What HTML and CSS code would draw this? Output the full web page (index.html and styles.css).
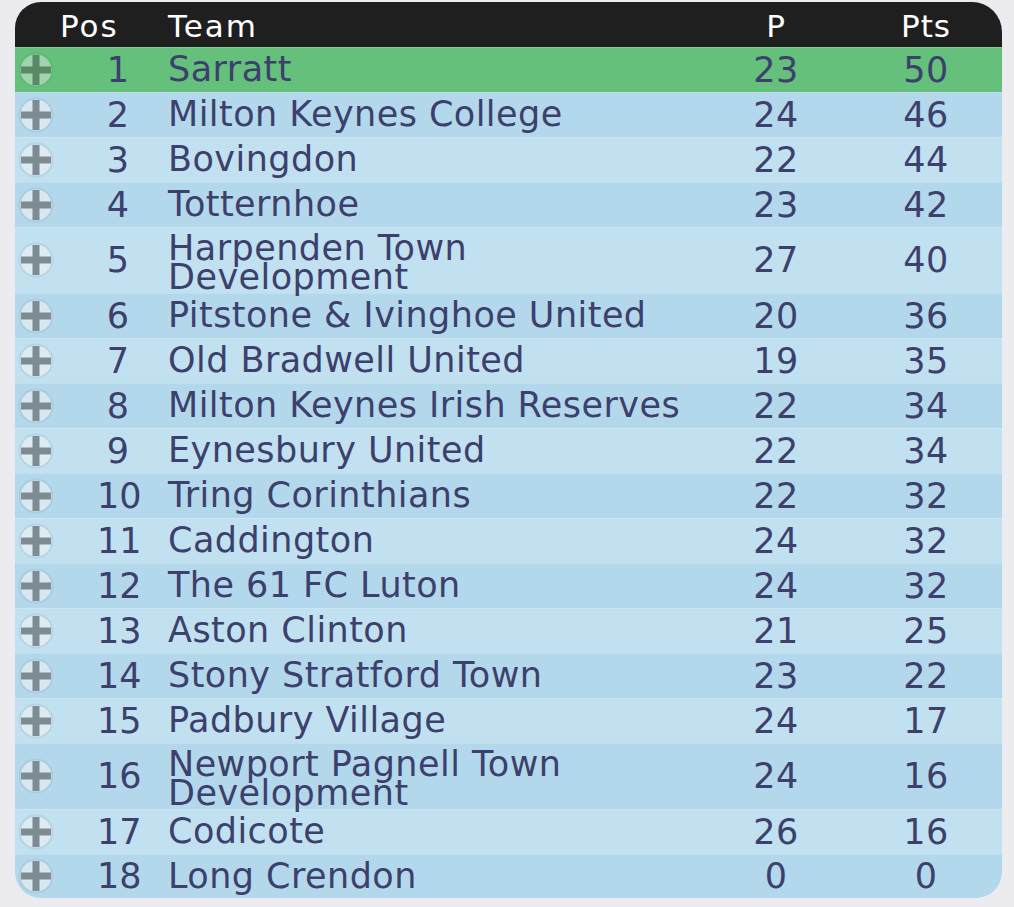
FILE: index.html
```html
<!DOCTYPE html>
<html>
<head>
<meta charset="utf-8">
<link rel="stylesheet" href="styles.css">
</head>
<body>
<div class="league">
  <div class="row head">
    <div class="c-pos">Pos</div>
    <div class="c-team">Team</div>
    <div class="c-p">P</div>
    <div class="c-pts">Pts</div>
  </div>
  <div class="row top">
    <div class="c-icon"><svg class="plus" viewBox="0 0 36 36"><circle cx="18" cy="18" r="17.5" class="ring"/><circle cx="18" cy="18" r="15.5" class="disc"/><rect x="14.5" y="3" width="7" height="30" class="bar"/><rect x="3" y="14.5" width="30" height="7" class="bar"/></svg></div>
    <div class="c-pos">1</div><div class="c-team">Sarratt</div><div class="c-p">23</div><div class="c-pts">50</div>
  </div>
  <div class="row even">
    <div class="c-icon"><svg class="plus" viewBox="0 0 36 36"><circle cx="18" cy="18" r="17.5" class="ring"/><circle cx="18" cy="18" r="15.5" class="disc"/><rect x="14.5" y="3" width="7" height="30" class="bar"/><rect x="3" y="14.5" width="30" height="7" class="bar"/></svg></div>
    <div class="c-pos">2</div><div class="c-team">Milton Keynes College</div><div class="c-p">24</div><div class="c-pts">46</div>
  </div>
  <div class="row odd">
    <div class="c-icon"><svg class="plus" viewBox="0 0 36 36"><circle cx="18" cy="18" r="17.5" class="ring"/><circle cx="18" cy="18" r="15.5" class="disc"/><rect x="14.5" y="3" width="7" height="30" class="bar"/><rect x="3" y="14.5" width="30" height="7" class="bar"/></svg></div>
    <div class="c-pos">3</div><div class="c-team">Bovingdon</div><div class="c-p">22</div><div class="c-pts">44</div>
  </div>
  <div class="row even">
    <div class="c-icon"><svg class="plus" viewBox="0 0 36 36"><circle cx="18" cy="18" r="17.5" class="ring"/><circle cx="18" cy="18" r="15.5" class="disc"/><rect x="14.5" y="3" width="7" height="30" class="bar"/><rect x="3" y="14.5" width="30" height="7" class="bar"/></svg></div>
    <div class="c-pos">4</div><div class="c-team">Totternhoe</div><div class="c-p">23</div><div class="c-pts">42</div>
  </div>
  <div class="row odd tall">
    <div class="c-icon"><svg class="plus" viewBox="0 0 36 36"><circle cx="18" cy="18" r="17.5" class="ring"/><circle cx="18" cy="18" r="15.5" class="disc"/><rect x="14.5" y="3" width="7" height="30" class="bar"/><rect x="3" y="14.5" width="30" height="7" class="bar"/></svg></div>
    <div class="c-pos">5</div><div class="c-team">Harpenden Town<br>Development</div><div class="c-p">27</div><div class="c-pts">40</div>
  </div>
  <div class="row even">
    <div class="c-icon"><svg class="plus" viewBox="0 0 36 36"><circle cx="18" cy="18" r="17.5" class="ring"/><circle cx="18" cy="18" r="15.5" class="disc"/><rect x="14.5" y="3" width="7" height="30" class="bar"/><rect x="3" y="14.5" width="30" height="7" class="bar"/></svg></div>
    <div class="c-pos">6</div><div class="c-team">Pitstone &amp; Ivinghoe United</div><div class="c-p">20</div><div class="c-pts">36</div>
  </div>
  <div class="row odd">
    <div class="c-icon"><svg class="plus" viewBox="0 0 36 36"><circle cx="18" cy="18" r="17.5" class="ring"/><circle cx="18" cy="18" r="15.5" class="disc"/><rect x="14.5" y="3" width="7" height="30" class="bar"/><rect x="3" y="14.5" width="30" height="7" class="bar"/></svg></div>
    <div class="c-pos">7</div><div class="c-team">Old Bradwell United</div><div class="c-p">19</div><div class="c-pts">35</div>
  </div>
  <div class="row even">
    <div class="c-icon"><svg class="plus" viewBox="0 0 36 36"><circle cx="18" cy="18" r="17.5" class="ring"/><circle cx="18" cy="18" r="15.5" class="disc"/><rect x="14.5" y="3" width="7" height="30" class="bar"/><rect x="3" y="14.5" width="30" height="7" class="bar"/></svg></div>
    <div class="c-pos">8</div><div class="c-team">Milton Keynes Irish Reserves</div><div class="c-p">22</div><div class="c-pts">34</div>
  </div>
  <div class="row odd">
    <div class="c-icon"><svg class="plus" viewBox="0 0 36 36"><circle cx="18" cy="18" r="17.5" class="ring"/><circle cx="18" cy="18" r="15.5" class="disc"/><rect x="14.5" y="3" width="7" height="30" class="bar"/><rect x="3" y="14.5" width="30" height="7" class="bar"/></svg></div>
    <div class="c-pos">9</div><div class="c-team">Eynesbury United</div><div class="c-p">22</div><div class="c-pts">34</div>
  </div>
  <div class="row even">
    <div class="c-icon"><svg class="plus" viewBox="0 0 36 36"><circle cx="18" cy="18" r="17.5" class="ring"/><circle cx="18" cy="18" r="15.5" class="disc"/><rect x="14.5" y="3" width="7" height="30" class="bar"/><rect x="3" y="14.5" width="30" height="7" class="bar"/></svg></div>
    <div class="c-pos">10</div><div class="c-team">Tring Corinthians</div><div class="c-p">22</div><div class="c-pts">32</div>
  </div>
  <div class="row odd">
    <div class="c-icon"><svg class="plus" viewBox="0 0 36 36"><circle cx="18" cy="18" r="17.5" class="ring"/><circle cx="18" cy="18" r="15.5" class="disc"/><rect x="14.5" y="3" width="7" height="30" class="bar"/><rect x="3" y="14.5" width="30" height="7" class="bar"/></svg></div>
    <div class="c-pos">11</div><div class="c-team">Caddington</div><div class="c-p">24</div><div class="c-pts">32</div>
  </div>
  <div class="row even">
    <div class="c-icon"><svg class="plus" viewBox="0 0 36 36"><circle cx="18" cy="18" r="17.5" class="ring"/><circle cx="18" cy="18" r="15.5" class="disc"/><rect x="14.5" y="3" width="7" height="30" class="bar"/><rect x="3" y="14.5" width="30" height="7" class="bar"/></svg></div>
    <div class="c-pos">12</div><div class="c-team">The 61 FC Luton</div><div class="c-p">24</div><div class="c-pts">32</div>
  </div>
  <div class="row odd">
    <div class="c-icon"><svg class="plus" viewBox="0 0 36 36"><circle cx="18" cy="18" r="17.5" class="ring"/><circle cx="18" cy="18" r="15.5" class="disc"/><rect x="14.5" y="3" width="7" height="30" class="bar"/><rect x="3" y="14.5" width="30" height="7" class="bar"/></svg></div>
    <div class="c-pos">13</div><div class="c-team">Aston Clinton</div><div class="c-p">21</div><div class="c-pts">25</div>
  </div>
  <div class="row even">
    <div class="c-icon"><svg class="plus" viewBox="0 0 36 36"><circle cx="18" cy="18" r="17.5" class="ring"/><circle cx="18" cy="18" r="15.5" class="disc"/><rect x="14.5" y="3" width="7" height="30" class="bar"/><rect x="3" y="14.5" width="30" height="7" class="bar"/></svg></div>
    <div class="c-pos">14</div><div class="c-team">Stony Stratford Town</div><div class="c-p">23</div><div class="c-pts">22</div>
  </div>
  <div class="row odd">
    <div class="c-icon"><svg class="plus" viewBox="0 0 36 36"><circle cx="18" cy="18" r="17.5" class="ring"/><circle cx="18" cy="18" r="15.5" class="disc"/><rect x="14.5" y="3" width="7" height="30" class="bar"/><rect x="3" y="14.5" width="30" height="7" class="bar"/></svg></div>
    <div class="c-pos">15</div><div class="c-team">Padbury Village</div><div class="c-p">24</div><div class="c-pts">17</div>
  </div>
  <div class="row even tall">
    <div class="c-icon"><svg class="plus" viewBox="0 0 36 36"><circle cx="18" cy="18" r="17.5" class="ring"/><circle cx="18" cy="18" r="15.5" class="disc"/><rect x="14.5" y="3" width="7" height="30" class="bar"/><rect x="3" y="14.5" width="30" height="7" class="bar"/></svg></div>
    <div class="c-pos">16</div><div class="c-team">Newport Pagnell Town<br>Development</div><div class="c-p">24</div><div class="c-pts">16</div>
  </div>
  <div class="row odd">
    <div class="c-icon"><svg class="plus" viewBox="0 0 36 36"><circle cx="18" cy="18" r="17.5" class="ring"/><circle cx="18" cy="18" r="15.5" class="disc"/><rect x="14.5" y="3" width="7" height="30" class="bar"/><rect x="3" y="14.5" width="30" height="7" class="bar"/></svg></div>
    <div class="c-pos">17</div><div class="c-team">Codicote</div><div class="c-p">26</div><div class="c-pts">16</div>
  </div>
  <div class="row even last">
    <div class="c-icon"><svg class="plus" viewBox="0 0 36 36"><circle cx="18" cy="18" r="17.5" class="ring"/><circle cx="18" cy="18" r="15.5" class="disc"/><rect x="14.5" y="3" width="7" height="30" class="bar"/><rect x="3" y="14.5" width="30" height="7" class="bar"/></svg></div>
    <div class="c-pos">18</div><div class="c-team">Long Crendon</div><div class="c-p">0</div><div class="c-pts">0</div>
  </div>
</div>
</body>
</html>
```
FILE: styles.css
```css
html, body {
  margin: 0;
  padding: 0;
  background: #ececf0;
}
body {
  padding: 2px 12px 0 15px;
  font-family: "DejaVu Sans", Verdana, sans-serif;
}
.league {
  width: 987px;
  border-radius: 26px 30px 26px 26px;
  overflow: hidden;
  color: #3d3f6c;
  font-size: 35px;
  letter-spacing: 0.45px;
}
.row {
  display: grid;
  grid-template-columns: 42px 40px 42px 577px 120px 30px 120px 16px;
  align-items: center;
  height: 45px;
  box-shadow: inset 0 1px 0 rgba(255, 255, 255, 0.18);
}
.row.tall { height: 66px; }
.row.last { height: 44px; }
.head {
  background: #1f1f1f;
  color: #ffffff;
  box-shadow: none;
  font-size: 31px;
  letter-spacing: 2px;
  padding-top: 3px;
  box-sizing: border-box;
}
.top { background: #64c07b; }
.even { background: #b3d8eb; }
.odd { background: #c1e1f1; }
.c-icon {
  grid-column: 1;
  display: flex;
  align-items: center;
  padding-left: 3px;
}
.c-pos {
  grid-column: 3;
  text-align: center;
  white-space: nowrap;
  letter-spacing: 0;
}
.head .c-pos {
  grid-column: 2 / 4;
  text-align: left;
  padding-left: 3px;
  letter-spacing: 2px;
}
.c-team {
  grid-column: 4;
  padding-left: 29px;
  line-height: 29px;
  white-space: nowrap;
}
.tall .c-team { padding-top: 5px; }
.c-p {
  grid-column: 5;
  text-align: center;
}
.c-pts {
  grid-column: 7;
  text-align: center;
}
.head .c-p, .head .c-pts { letter-spacing: 1px; }
.plus {
  width: 36px;
  height: 36px;
  display: block;
}
.plus .ring { fill: rgba(140, 160, 170, 0.2); }
.plus .disc { fill: rgba(255, 255, 255, 0.55); }
.plus .bar { fill: #7d8c93; }
.top .plus .ring { fill: rgba(90, 140, 100, 0.15); }
.top .plus .disc { fill: rgba(255, 255, 255, 0.4); }
.top .plus .bar { fill: #5b8868; }
```
